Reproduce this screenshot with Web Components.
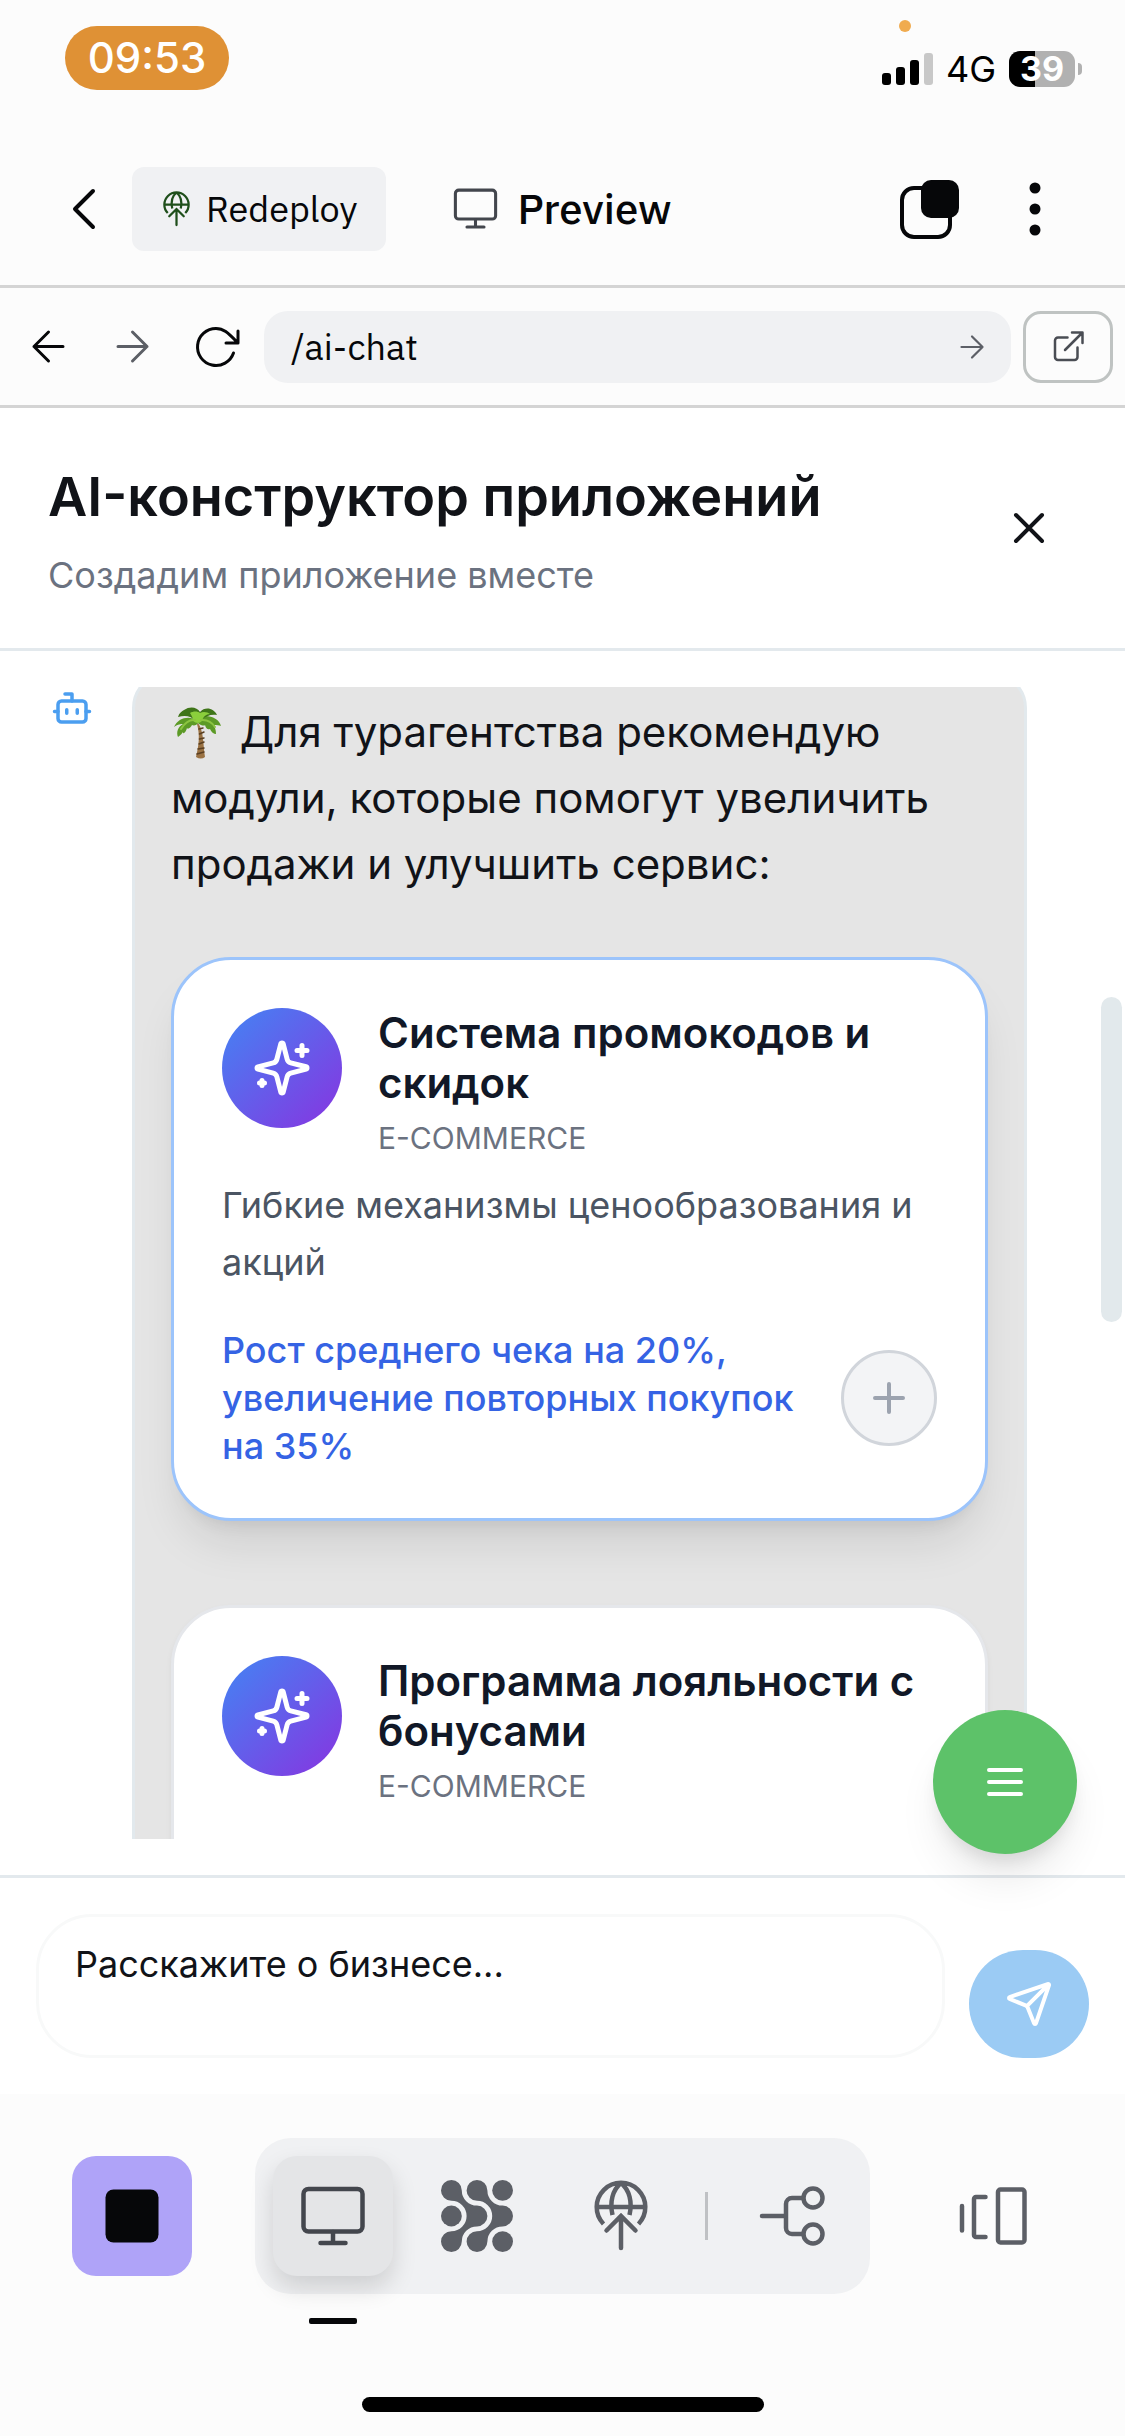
<!DOCTYPE html>
<html lang="ru">
<head>
<meta charset="utf-8">
<meta name="viewport" content="width=device-width, initial-scale=1">
<title>Preview</title>
<style>
  html, body { height: 100%; }
  body { margin: 0; background: #fcfcfc; color: #111318; font-family: Inter, "Liberation Sans", sans-serif; }
</style>
</head>
<body>
<preview-app></preview-app>

<script>
const ICONS = {
  deploy: ['0 0 54 72', `<g stroke-width="4.5" stroke-linecap="butt"><path d="M9.5 44A24.3 24.3 0 1 1 44.5 44M3 27H51M27 3C18.5 10 15.5 22 18.5 35M27 3C35.500 10 38.500 22 35.500 35"/><path stroke-linecap="round" stroke-linejoin="miter" d="M27 68V36M12.500 50.500L27 36L41.500 50.500"/></g>`],
  monitor: ['0 0 66 60', `<g stroke-width="4.5"><rect x="3.500" y="3" width="59" height="42.500" rx="5"/><path d="M33 46V57M20.500 57H45.500"/></g>`],
  back: ['0 0 24 42', `<path stroke-width="4" d="M21 3L3 21L21 39"/>`],
  stack: ['0 0 60 60', `<rect x="3" y="9" width="48" height="49" rx="12" stroke-width="4"/><rect x="22" y="1" width="38" height="38" rx="10" fill="currentColor" stroke="none"/>`],
  more: ['0 0 12 54', `<g fill="currentColor" stroke="none"><circle cx="6" cy="6" r="5.500"/><circle cx="6" cy="27" r="5.500"/><circle cx="6" cy="48" r="5.500"/></g>`],
  left: ['0 0 33 33', `<path stroke-width="3" d="M31 16.500H2M16.500 2L2 16.500L16.500 31"/>`],
  right: ['0 0 33 33', `<path stroke-width="3" d="M2 16.500H31M16.500 2L31 16.500L16.500 31"/>`],
  reload: ['0 0 48 44', `<path stroke-width="3" d="M39.500 28A18.500 18.500 0 1 1 22 3.500C30 3.500 34 8 44 18M44 6V18H32"/>`],
  external: ['0 0 33 33', `<path stroke-width="2.500" d="M15.500 7.500H6a3 3 0 0 0-3 3V27a3 3 0 0 0 3 3H22.500a3 3 0 0 0 3-3V17.500M13 20L30 3M20 2.500H30.500V13"/>`],
  close: ['0 0 30 30', `<path stroke-width="4" d="M2 2L28 28M28 2L2 28"/>`],
  bot: ['0 0 24 24', `<g stroke-width="2"><path d="M12 8V4H8"/><rect width="16" height="12" x="4" y="8" rx="2"/><path d="M2 14h2M20 14h2M15 13v2M9 13v2"/></g>`],
  sparkles: ['0 0 24 24', `<g stroke-width="2"><path d="M9.937 15.500A2 2 0 0 0 8.500 14.063l-6.135-1.582a.5.5 0 0 1 0-.962L8.500 9.936A2 2 0 0 0 9.937 8.500l1.582-6.135a.5.5 0 0 1 .963 0L14.063 8.500A2 2 0 0 0 15.500 9.937l6.135 1.581a.5.5 0 0 1 0 .964L15.500 14.063a2 2 0 0 0-1.437 1.437l-1.582 6.135a.5.5 0 0 1-.963 0z"/><path d="M20 3v4M22 5h-4M4 17v2M5 18H3"/></g>`],
  plus: ['0 0 24 24', `<path stroke-width="2" d="M5 12h14M12 5v14"/>`],
  menu: ['0 0 36 30', `<path stroke-width="4" d="M2 3H34M2 15H34M2 27H34"/>`],
  send: ['0 0 24 24', `<path stroke-width="2" d="M14.536 21.686a.5.5 0 0 0 .937-.024l6.500-19a.496.496 0 0 0-.635-.635l-19 6.500a.5.5 0 0 0-.024.937l7.930 3.180a2 2 0 0 1 1.112 1.110zM21.854 2.147l-10.940 10.939"/>`],
  stop: ['0 0 54 54', `<rect width="53" height="53" x=".5" y=".5" rx="8" fill="currentColor" stroke="none"/>`],
  mesh: ['0 0 72 72', `<g fill="currentColor" stroke="none"><path id="a" d="M20.800 10.400A15.200 15.200 0 0 0 36 25.600A10.400 10.400 0 0 1 36 46.400A15.200 15.200 0 0 0 20.800 61.600A10.400 10.400 0 1 1 10.400 51.200A15.200 15.200 0 0 0 10.400 20.800A10.400 10.400 0 1 1 20.800 10.400Z"/><use href="#a" x="25.600"/><circle cx="61.600" cy="10.400" r="10.400"/><circle cx="10.400" cy="36" r="10.400"/><circle cx="61.600" cy="61.600" r="10.400"/></g>`],
  branch: ['0 0 66 60', `<g stroke-width="4.5"><circle cx="54" cy="12" r="9.500"/><circle cx="54" cy="48" r="9.500"/><path d="M3 30H27M44 12H33a6 6 0 0 0-6 6V42a6 6 0 0 0 6 6H44"/></g>`],
  slides: ['0 0 70 60', `<g stroke-width="4.5"><path d="M4 20V44.500M27.500 11H18a2 2 0 0 0-2 2V49a2 2 0 0 0 2 2H27.500"/><rect x="40" y="3.500" width="26.500" height="53" rx="2.500"/></g>`],
  signal: ['0 0 51 32', `<g fill="currentColor" stroke="none"><rect y="20" width="9" height="12" rx="3"/><rect x="14" y="14" width="9" height="18" rx="3"/><rect x="28" y="7" width="9" height="25" rx="3"/><rect x="42" width="9" height="32" rx="3" fill="#c8c8c8"/></g>`],
  palm: ['0 0 48 52', `<g stroke="none"><path d="M25 16C31 24 30 38 32 50Q28 53 23 50C26 38 27 28 24 17Z" fill="#9a7243"/><path d="M26 22l4-1M26.500 27l4.500-2M26.500 32l4.500-1M26 37l5-2M25 42l6-1M24 47l7-2" stroke="#5a3f22" stroke-width="1.500"/><path d="M24 14C18 8 5 10 1 20C5 17 8 17 10 17C5 20 3 25 5 30C8 28 9 26 10 25C10 28 13 25 14 21C15 23 18 20 19 18C21 19 24 18 25 16C28 19 32 19 32 18C33 22 35 23 37 22C38 25 41 27 43 27C43 23 42 20 40 18C44 18 46 18 48 19C46 11 35 7 27 10Z" fill="#5c9a26"/><path d="M11 3C17-1 24 0 27 5C32-1 41 1 44 8C38 7 33 9 28 13L22 14C19 9 12 8 5 10C6 6 9 4 11 3Z" fill="#3f7519"/><path d="M17 6C20 4 25 4 27 6C30 4 35 5 37 7C33 7 30 10 29 14Q25 18 20 14C20 10 18 8 17 6Z" fill="#8bcf3c"/><path d="M22 13Q14 12 8 22M28 13Q37 12 42 20" stroke="#8bc440" stroke-width="2" fill="none"/></g>`]
};

function define(name, html, setup) {
  const template = document.createElement('template');
  template.innerHTML = `<style>
    *, *::before { box-sizing: border-box; }
    button { padding: 0; border: 0; background: none; color: inherit; font: inherit; cursor: pointer; }
    button, a { display: flex; align-items: center; justify-content: center; flex: none; }
    h1, h2, p { margin: 0; }
  </style>` + html;
  customElements.define(name, class extends HTMLElement {
    constructor() {
      super();
      this.attachShadow({ mode: 'open' }).append(template.content.cloneNode(true));
    }
    connectedCallback() { if (setup) setup(this, this.shadowRoot); }
  });
}

/* Stroke icon; width and height come from the element's box. */
define('ui-icon', `<style>
  :host { display: block; flex: none; }
  svg { display: block; width: 100%; height: 100%; overflow: visible; }
</style><svg fill="none" stroke="currentColor" stroke-linecap="round" stroke-linejoin="round" aria-hidden="true"></svg>`,
(host, root) => {
  const [box, body] = ICONS[host.getAttribute('name')];
  const svg = root.querySelector('svg');
  svg.setAttribute('viewBox', box);
  svg.innerHTML = body;
});

define('status-bar', `<style>
  :host { display: flex; justify-content: space-between; align-items: flex-start; height: 132px; padding: 26px 43px 0 65px; color: #000; position: relative; }
  .time { width: 164px; height: 64px; border-radius: 32px; background: #df9135; color: #fff; font-size: 42px; line-height: 64px; text-align: center; font-weight: 500; }
  .right { display: flex; align-items: center; gap: 13px; height: 86px; }
  .net { font-size: 36px; line-height: 36px; }
  ui-icon { width: 51px; height: 32px; }
  .battery { display: flex; align-items: center; gap: 3px; }
  .cell { width: 66px; height: 36px; border-radius: 11px; background: linear-gradient(90deg, #000 26px, #b1b1b1 26px); color: #fff; font-size: 34px; line-height: 36px; font-weight: 700; text-align: center; }
  .nub { width: 4px; height: 12px; border-radius: 0 4px 4px 0; background: #b1b1b1; }
  .mic { position: absolute; right: 214px; top: 20px; width: 12px; height: 12px; border-radius: 50%; background: #f0ab4f; }
</style>
<span class="time">09:53</span>
<div class="right"><ui-icon name="signal"></ui-icon><span class="net">4G</span><span class="battery"><span class="cell">39</span><span class="nub"></span></span></div>
<span class="mic"></span>`);

define('app-header', `<style>
  :host { display: flex; align-items: center; height: 156px; padding: 0 84px 0 72px; border-bottom: 3px solid #d4d4d4; color: #060709; font-family: "IBM Plex Sans", Roboto, Inter, sans-serif; }
  .back ui-icon { width: 24px; height: 42px; }
  .back { margin-right: 36px; }
  .deploy { height: 84px; padding: 0 28px 0 31px; gap: 16px; border-radius: 12px; background: #f0f1f3; font-size: 36px; }
  .deploy ui-icon { width: 27px; height: 36px; color: #1f4f1b; }
  .title { display: flex; align-items: center; gap: 20px; margin-left: 67px; flex: 1; font-size: 42px; font-weight: 500; line-height: 48px; }
  .title ui-icon { width: 45px; height: 41px; color: #43464d; }
  h1 { font: inherit; }
  .stack ui-icon { width: 60px; height: 60px; }
  .more { margin-left: 70px; }
  .more ui-icon { width: 12px; height: 54px; }
</style>
<button class="back" aria-label="Back"><ui-icon name="back"></ui-icon></button>
<button class="deploy"><ui-icon name="deploy"></ui-icon>Redeploy</button>
<div class="title"><ui-icon name="monitor"></ui-icon><h1>Preview</h1></div>
<button class="stack" aria-label="Windows"><ui-icon name="stack"></ui-icon></button>
<button class="more" aria-label="More"><ui-icon name="more"></ui-icon></button>`);

define('address-bar', `<style>
  :host { display: flex; align-items: center; height: 120px; padding: 0 12px 0 6px; border-bottom: 3px solid #d4d4d4; color: #060709; }
  .nav { display: flex; align-items: center; flex: none; margin-right: 3px; }
  .nav button { width: 84px; height: 72px; }
  .nav .reload { width: 87px; }
  ui-icon { width: 33px; height: 33px; }
  .fwd { color: #5c5f66; }
  .reload ui-icon { width: 48px; height: 44px; }
  form { display: flex; align-items: center; flex: 1; min-width: 0; height: 72px; margin-right: 12px; padding: 0 27px; border-radius: 24px; background: #f0f1f3; color: #5c5f66; }
  input { flex: 1; min-width: 0; height: 72px; padding: 0; border: 0; outline: 0; background: none; color: #060709; font: 36px "IBM Plex Sans", Roboto, Inter, sans-serif; }
  form ui-icon { width: 24px; height: 24px; }
  a { width: 90px; height: 72px; border: 3px solid #bfc3c2; border-radius: 18px; color: #4a4d54; }
</style>
<div class="nav">
  <button aria-label="Back"><ui-icon name="left"></ui-icon></button>
  <button class="fwd" aria-label="Forward"><ui-icon name="right"></ui-icon></button>
  <button class="reload" aria-label="Reload"><ui-icon name="reload"></ui-icon></button>
</div>
<form><input type="text" value="/ai-chat" aria-label="Path"><button type="button" aria-label="Go"><ui-icon name="right"></ui-icon></button></form>
<a href="#" aria-label="Open in new tab"><ui-icon name="external"></ui-icon></a>`);

define('chat-header', `<style>
  :host { display: flex; align-items: center; justify-content: space-between; height: 243px; padding: 0 81px 0 48px; background: #fff; border-bottom: 3px solid #e3e9ed; }
  h2 { font-size: 54px; line-height: 84px; font-weight: 600; color: #111318; }
  p { margin-top: 9px; font-size: 36px; line-height: 54px; color: #6b7280; }
  ui-icon { width: 30px; height: 30px; }
</style>
<div><h2><slot name="title"></slot></h2><p><slot></slot></p></div>
<button aria-label="Закрыть"><ui-icon name="close"></ui-icon></button>`);

define('module-card', `<style>
  :host { display: block; min-height: 564px; padding: 48px; border: 3px solid #e5e7eb; border-radius: 60px; background: #fff; box-shadow: 0 3px 6px rgba(0,0,0,.05); }
  :host([selected]) { border-color: #9cc4fb; box-shadow: 0 30px 45px -9px rgba(0,0,0,.1), 0 12px 18px -12px rgba(0,0,0,.1); }
  .head { display: flex; gap: 36px; }
  .badge { display: flex; align-items: center; justify-content: center; flex: none; width: 120px; height: 120px; border-radius: 50%; background: linear-gradient(135deg, #4285f4, #8833e0); color: #fff; }
  .badge ui-icon { width: 60px; height: 60px; }
  h2 { font-size: 42px; line-height: 50px; font-weight: 600; color: #111827; }
  .kind { margin-top: 9px; font-size: 30px; line-height: 42px; color: #6b7280; }
  .desc { margin-top: 18px; font-size: 36px; line-height: 57px; color: #4b5563; }
  .foot { display: flex; align-items: center; justify-content: space-between; gap: 36px; margin-top: 35px; }
  .gain { font-size: 36px; line-height: 48px; font-weight: 500; color: #3563e4; }
  button { width: 96px; height: 96px; border: 3px solid #d1d5db; border-radius: 50%; background: #f3f4f6; color: #9ca3af; }
  button ui-icon { width: 48px; height: 48px; }
  :host(:not([selected])) .desc, :host(:not([selected])) .foot { display: none; }
</style>
<div class="head">
  <span class="badge"><ui-icon name="sparkles"></ui-icon></span>
  <div><h2><slot name="title"></slot></h2><p class="kind"><slot name="kind"></slot></p></div>
</div>
<p class="desc"><slot></slot></p>
<div class="foot"><p class="gain"><slot name="gain"></slot></p><button aria-label="Добавить"><ui-icon name="plus"></ui-icon></button></div>`);

define('chat-message', `<style>
  :host { display: flex; align-items: flex-start; }
  .bot { width: 42px; height: 42px; margin-right: 39px; color: #4b9ef0; }
  .bubble { flex: 1; min-width: 0; margin-top: -15px; padding: 24px 36px; border: 3px solid #e2e9ed; border-radius: 36px; background: #e5e5e5; }
  p { font-size: 42px; line-height: 66px; color: #111318; }
  .palm { display: inline-block; width: 48px; height: 52px; vertical-align: -12px; margin: -6px 7px 0 2px; }
  .cards { display: flex; flex-direction: column; gap: 84px; margin-top: 60px; }
</style>
<ui-icon class="bot" name="bot"></ui-icon>
<div class="bubble"><p><ui-icon class="palm" name="palm" role="img" aria-label="Пальма"></ui-icon> <slot name="text"></slot></p><div class="cards"><slot></slot></div></div>`);

define('chat-feed', `<style>
  :host { display: block; position: relative; flex: 1; min-height: 0; padding: 36px 98px 36px 51px; background: #fff; border-bottom: 3px solid #e3e9ed; }
  .view { height: 100%; overflow: hidden; }
  .thumb { position: absolute; right: 3px; top: 346px; width: 21px; height: 325px; border-radius: 11px; background: #e2e9ec; }
  .fab { position: absolute; right: 48px; bottom: 21px; z-index: 1; width: 144px; height: 144px; border-radius: 50%; background: #5dc269; color: #fff; box-shadow: 0 30px 45px -9px rgba(0,0,0,.1), 0 12px 18px -6px rgba(0,0,0,.1); }
  .fab ui-icon { width: 36px; height: 30px; }
</style>
<div class="view"><slot></slot></div>
<span class="thumb"></span>
<button class="fab" aria-label="Меню"><ui-icon name="menu"></ui-icon></button>`);

define('chat-composer', `<style>
  :host { display: flex; align-items: flex-end; gap: 24px; padding: 36px; background: #fff; }
  textarea { display: block; flex: 1; min-width: 0; height: 144px; padding: 20px 36px; border: 3px solid #f8f9f9; border-radius: 56px; outline: 0; resize: none; background: #fff; color: #111318; font: 36px/54px Inter, sans-serif; overflow: hidden; }
  textarea::placeholder { color: #111318; opacity: 1; }
  button { width: 120px; height: 108px; border-radius: 54px; background: #9bcbf4; color: #fff; }
  ui-icon { width: 48px; height: 48px; }
</style>
<textarea aria-label="Сообщение" placeholder="Расскажите о бизнесе..."></textarea>
<button aria-label="Отправить"><ui-icon name="send"></ui-icon></button>`);

define('tool-dock', `<style>
  :host { display: flex; flex-direction: column; align-items: center; height: 342px; padding-top: 44px; background: #fcfcfc; color: #5c5f66; }
  .row { display: flex; align-items: center; justify-content: space-between; align-self: stretch; padding: 0 72px; }
  button { width: 120px; height: 120px; border-radius: 24px; }
  .stop { background: #afa3f8; color: #060709; }
  .tools { display: flex; align-items: center; gap: 24px; padding: 18px; border-radius: 36px; background: #f0f1f3; }
  .active { position: relative; background: #e4e5e7; color: #43464d; box-shadow: 0 12px 24px rgba(0,0,0,.14); }
  .active::before { content: ""; position: absolute; left: 36px; top: 162px; width: 48px; height: 6px; border-radius: 2px; background: #060709; }
  .rule { width: 3px; height: 48px; background: #bfc1c4; }
  .w66 { width: 66px; height: 60px; }
  .w54 { width: 54px; height: 54px; }
  .mesh { width: 72px; height: 72px; }
  .dep { width: 54px; height: 72px; }
  .sl { width: 70px; height: 60px; }
  .home { width: 402px; height: 15px; margin-top: 103px; border-radius: 8px; background: #000; }
</style>
<div class="row">
  <button class="stop" aria-label="Stop"><ui-icon class="w54" name="stop"></ui-icon></button>
  <div class="tools">
    <button class="active" aria-label="Preview"><ui-icon class="w66" name="monitor"></ui-icon></button>
    <button aria-label="Agent"><ui-icon class="mesh" name="mesh"></ui-icon></button>
    <button aria-label="Deploy"><ui-icon class="dep" name="deploy"></ui-icon></button>
    <span class="rule"></span>
    <button aria-label="Branches"><ui-icon class="w66" name="branch"></ui-icon></button>
  </div>
  <button aria-label="Tabs"><ui-icon class="sl" name="slides"></ui-icon></button>
</div>
<span class="home"></span>`);

define('preview-app', `<style>
  :host { display: flex; flex-direction: column; height: 100vh; min-height: 1600px; }
  status-bar, app-header, address-bar, chat-header, chat-composer, tool-dock { flex: none; box-sizing: border-box; }
  chat-feed, module-card { box-sizing: border-box; }
</style>
<status-bar></status-bar>
<app-header></app-header>
<address-bar></address-bar>
<chat-header><span slot="title">AI-конструктор приложений</span>Создадим приложение вместе</chat-header>
<chat-feed>
  <chat-message>
    <span slot="text">Для турагентства рекомендую модули, которые помогут увеличить продажи и улучшить сервис:</span>
    <module-card selected>
      <span slot="title">Система промокодов и скидок</span>
      <span slot="kind">E-COMMERCE</span>
      Гибкие механизмы ценообразования и акций
      <span slot="gain">Рост среднего чека на 20%, увеличение повторных покупок на 35%</span>
    </module-card>
    <module-card>
      <span slot="title">Программа лояльности с бонусами</span>
      <span slot="kind">E-COMMERCE</span>
    </module-card>
  </chat-message>
</chat-feed>
<chat-composer></chat-composer>
<tool-dock></tool-dock>`);
</script>
</body>
</html>
